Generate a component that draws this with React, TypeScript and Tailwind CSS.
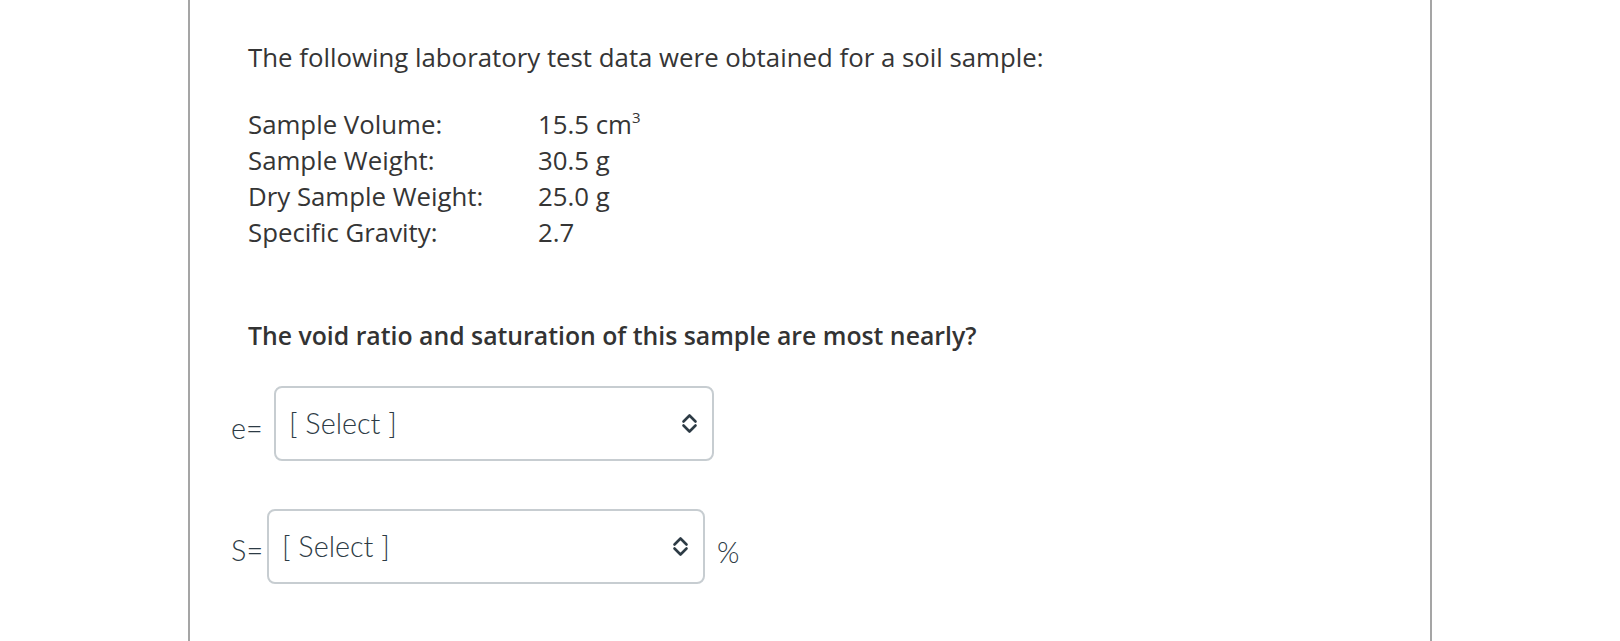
import React from "react";

const dataRows: { label: string; value: React.ReactNode }[] = [
  {
    label: "Sample Volume:",
    value: (
      <>
        15.5 cm<sup className="text-[15px] relative -top-[11px]">3</sup>
      </>
    ),
  },
  { label: "Sample Weight:", value: "30.5 g" },
  { label: "Dry Sample Weight:", value: "25.0 g" },
  { label: "Specific Gravity:", value: "2.7" },
];

const UpDown = () => (
  <svg width="17" height="21" viewBox="0 0 17 21" fill="none" className="text-[#2d3b45]">
    <polyline points="2.5,8.5 8.5,2.5 14.5,8.5" stroke="currentColor" strokeWidth="2.6" strokeLinecap="round" strokeLinejoin="round" />
    <polyline points="2.5,12.5 8.5,18.5 14.5,12.5" stroke="currentColor" strokeWidth="2.6" strokeLinecap="round" strokeLinejoin="round" />
  </svg>
);

interface SelectBoxProps {
  width: string;
}

const SelectBox = ({ width }: SelectBoxProps) => (
  <div
    className={`${width} h-[75px] border-2 border-[#c7cdd1] rounded-[8px] bg-white flex items-center justify-between pl-[13px] pr-[14px]`}
  >
    <span className="leading-none text-[#2d3b45]">[ Select ]</span>
    <UpDown />
  </div>
);

export default function App() {
  return (
    <div className="w-full h-[641px] bg-white flex justify-center overflow-hidden">
      <div className="w-[1244px] h-full border-x-2 border-[#a5a5a5]">
        {/* problem statement */}
        <div className="pl-[58px] pt-[39px] text-[#353535] text-[25.8px] leading-[36px] font-['Open_Sans',sans-serif]">
          <p>The following laboratory test data were obtained for a soil sample:</p>
          <div className="mt-[31px] grid grid-cols-[290px_auto]">
            {dataRows.map((row) => (
              <React.Fragment key={row.label}>
                <span>{row.label}</span>
                <span>{row.value}</span>
              </React.Fragment>
            ))}
          </div>
          <p className="mt-[67px] font-semibold text-[24.8px] text-[#333]">
            The void ratio and saturation of this sample are most nearly?
          </p>
        </div>

        {/* answers */}
        <div className="pl-[41px] mt-[33px] font-['Lato',sans-serif] font-light text-[28.8px] text-[#2d3b45]">
          <div className="flex items-end">
            <span className="w-[43px] leading-none pb-[18px]">e=</span>
            <SelectBox width="w-[440px]" />
          </div>
          <div className="flex items-end mt-[48px]">
            <span className="w-[36px] leading-none pb-[19px]">S=</span>
            <SelectBox width="w-[438px]" />
            <span className="ml-[12px] leading-none pb-[17px]">%</span>
          </div>
        </div>
      </div>
    </div>
  );
}
